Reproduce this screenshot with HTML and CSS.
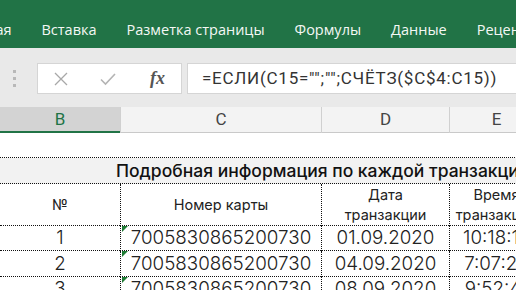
FILE: index.html
```html
<!DOCTYPE html>
<html lang="ru">
<head>
    <meta charset="UTF-8">
    <title>Excel — Подробная информация</title>
    <link rel="stylesheet" href="styles.css">
</head>
<body>
    <div class="ribbon">
        <span class="tab tab-first">Главная</span>
        <span class="tab">Вставка</span>
        <span class="tab">Разметка страницы</span>
        <span class="tab">Формулы</span>
        <span class="tab">Данные</span>
        <span class="tab">Рецензирование</span>
    </div>

    <div class="formula-bar">
        <div class="handle"><i></i><i></i><i></i></div>
        <div class="fx-tools">
            <svg class="tool" width="14" height="14" viewBox="0 0 14 14">
                <path d="M1 1 L13 13 M13 1 L1 13" stroke="#a8a8a8" stroke-width="1.3" fill="none"/>
            </svg>
            <svg class="tool" width="16" height="14" viewBox="0 0 16 14">
                <path d="M1 7.5 L5.5 12 L15 2" stroke="#b4b4b4" stroke-width="1.6" fill="none"/>
            </svg>
            <span class="fx">fx</span>
        </div>
        <div class="formula">=ЕСЛИ(C15="";"";СЧЁТЗ($C$4:C15))</div>
    </div>

    <div class="col-headers">
        <div class="col-head selected">B</div>
        <div class="col-head">C</div>
        <div class="col-head">D</div>
        <div class="col-head">E</div>
    </div>

    <div class="sheet">
        <div class="cell blank"></div>
        <div class="cell title">Подробная информация по каждой транзакции</div>

        <div class="cell head">№</div>
        <div class="cell head sep">Номер карты</div>
        <div class="cell head sep">Дата<br>транзакции</div>
        <div class="cell head sep">Время<br>транзакции</div>

        <div class="cell">1</div>
        <div class="cell sep text-num">7005830865200730</div>
        <div class="cell sep">01.09.2020</div>
        <div class="cell sep">10:18:15</div>

        <div class="cell">2</div>
        <div class="cell sep text-num">7005830865200730</div>
        <div class="cell sep">04.09.2020</div>
        <div class="cell sep">7:07:22</div>

        <div class="cell">3</div>
        <div class="cell sep text-num">7005830865200730</div>
        <div class="cell sep">08.09.2020</div>
        <div class="cell sep">9:52:41</div>
    </div>
</body>
</html>
```

FILE: styles.css
```css
body {
    margin: 0;
    width: 516px;
    height: 290px;
    overflow: hidden;
    background-color: white;
    font-family: "Open Sans", "Noto Sans", sans-serif;
}
.ribbon {
    height: 48px;
    background-color: #217346;
    display: flex;
    align-items: center;
    gap: 30px;
    margin-left: -46px;
    white-space: nowrap;
    padding-top: 10px;
    box-sizing: border-box;
}
.tab {
    color: #f4f8f5;
    font-size: 14.5px;
}
.formula-bar {
    height: 59px;
    background-color: #e9e9e9;
    display: flex;
    align-items: flex-start;
    padding-top: 15px;
    box-sizing: border-box;
}
.handle {
    width: 37px;
    display: flex;
    flex-direction: column;
    align-items: center;
    gap: 4px;
    padding-top: 7px;
    margin-left: -4px;
    margin-right: 4px;
}
.handle i {
    width: 3px;
    height: 3px;
    background-color: #b8b8b8;
}
.fx-tools {
    width: 145px;
    height: 31px;
    box-sizing: border-box;
    background-color: white;
    border: 1px solid #d5d5d5;
    display: flex;
    align-items: center;
    padding-left: 16px;
    gap: 32px;
}
.fx {
    font-family: "Liberation Serif", serif;
    font-style: italic;
    font-weight: bold;
    font-size: 18px;
    color: #555;
    margin-left: 2px;
}
.formula {
    margin-left: 5px;
    flex: 1;
    height: 31px;
    box-sizing: border-box;
    background-color: white;
    border: 1px solid #d5d5d5;
    border-right: none;
    padding-left: 14px;
    font-family: "Roboto", sans-serif;
    font-size: 17px;
    letter-spacing: 0.75px;
    color: #333;
    line-height: 29px;
    white-space: nowrap;
}
.col-headers {
    display: grid;
    grid-template-columns: 120px 201px 128px 94px;
    height: 26px;
    background-color: #f3f3f3;
    border-bottom: 1px solid #c9c9c9;
    box-sizing: border-box;
}
.col-head {
    font-family: "Roboto", sans-serif;
    font-size: 17px;
    color: #444;
    text-align: center;
    line-height: 25px;
    border-left: 1px solid #d0d0d0;
}
.col-head.selected {
    background-color: #d3d3d3;
    color: #217346;
    border-left: none;
    border-bottom: 2px solid #217346;
    line-height: 24px;
}
.sheet {
    display: grid;
    grid-template-columns: 120px 201px 128px 94px;
    grid-template-rows: 25px 26px 42px 25px 26px 25px;
    font-family: "Inter", sans-serif;
    font-weight: 300;
    color: #222;
}
.cell {
    position: relative;
    border-bottom: 1px dotted #111;
    display: flex;
    align-items: center;
    justify-content: center;
    text-align: center;
    font-size: 18.8px;
    white-space: nowrap;
    line-height: 20px;
}
.cell.sep {
    border-left: 1px dotted #111;
}
.cell.blank {
    grid-column: 1 / -1;
}
.cell.title {
    grid-column: 1 / -1;
    background-color: #f2f2f2;
    font-weight: 500;
    font-size: 17.5px;
    justify-content: flex-start;
    padding-left: 116px;
    color: #111;
}
.cell.head {
    font-size: 14.5px;
    font-weight: 400;
    line-height: 20px;
}
.text-num::before {
    content: "";
    position: absolute;
    left: 1px;
    top: 0;
    border-top: 6px solid #1e7b34;
    border-right: 6px solid transparent;
}
```
